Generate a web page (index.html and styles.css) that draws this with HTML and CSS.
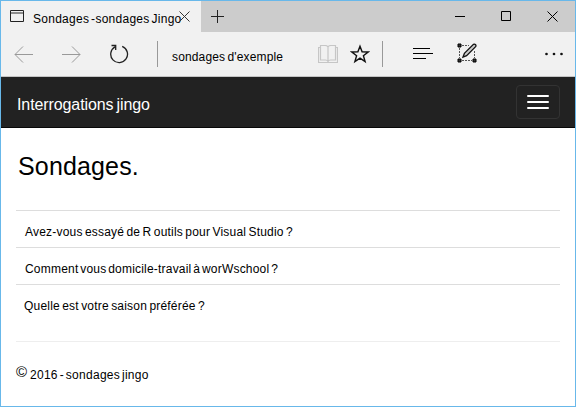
FILE: index.html
```html
<!DOCTYPE html>
<html lang="fr">
<head>
<meta charset="utf-8">
<title>Sondages - sondages Jingo</title>
<link rel="stylesheet" href="styles.css">
</head>
<body>
<div class="window">
  <header class="titlebar">
    <div class="tab">
      <svg class="tab-icon" width="14" height="12" viewBox="0 0 14 12"><rect x="0" y="2" width="14" height="2" fill="#8d8d8d"/><path d="M.5.5h13v11H.5z" fill="none" stroke="#222"/></svg>
      <span class="tab-title">Sondages -sondages Jingo</span>
      <svg class="tab-close" width="11" height="11" viewBox="0 0 11 11"><path d="M.5.5l10 10M10.5.5l-10 10" stroke="#333" fill="none"/></svg>
    </div>
    <svg class="new-tab" width="13" height="13" viewBox="0 0 13 13"><path d="M0 6.5h13M6.5 0v13" stroke="#222"/></svg>
    <div class="controls">
      <svg width="11" height="11" viewBox="0 0 11 11"><path d="M0 5.5h10" stroke="#000"/></svg>
      <svg width="11" height="11" viewBox="0 0 11 11"><path d="M.5.5h9v9h-9z" fill="none" stroke="#000"/></svg>
      <svg width="11" height="11" viewBox="0 0 11 11"><path d="M.5.5l10 10M10.5.5l-10 10" stroke="#000" fill="none"/></svg>
    </div>
  </header>
  <div class="toolbar">
    <svg class="back" width="19" height="17" viewBox="0 0 19 17"><path d="M19 8.5H1M9 .5l-8 8 8 8" fill="none" stroke="#999"/></svg>
    <svg class="forward" width="19" height="17" viewBox="0 0 19 17"><path d="M0 8.5h18M10 .5l8 8-8 8" fill="none" stroke="#999"/></svg>
    <svg class="reload" width="20" height="20" viewBox="0 0 20 20"><path d="M13.2 2.4A8.4 8.4 0 1 1 6 2.9M2.500 1.500h4.200v4.500" fill="none" stroke="#222" stroke-width="1.300"/></svg>
    <span class="divider"></span>
    <span class="address">sondages d'exemple</span>
    <svg class="book" width="20" height="19" viewBox="0 0 20 19"><path d="M10 1.800Q9 .5 7 .5H2.500v14.500H7.500Q9.300 15 10 16.500Q10.700 15 12.500 15H17.500V.5H13Q11 .5 10 1.800zM10 1.800v14.700M2.500 2.500h-2v15h19v-15h-2" fill="none" stroke="#c6c6c6" stroke-width="1.200"/></svg>
    <svg class="star" width="20" height="20" viewBox="0 0 20 20"><path d="M10 2.200l2.100 5.600 6 .2-4.700 3.700 1.700 5.800L10 14.100l-5.100 3.400 1.700-5.800L1.900 8l6-.2z" fill="none" stroke="#111" stroke-width="1.400"/></svg>
    <span class="divider"></span>
    <svg class="hub" width="20" height="12" viewBox="0 0 20 12"><path d="M0 .5h17M0 5.500h20M0 10.500h13" stroke="#000" stroke-width="1.200"/></svg>
    <svg class="note" width="20" height="20" viewBox="0 0 20 20"><path d="M5 2.500h7M2.500 5v10M5 17.500h10M17.500 8v7" fill="none" stroke="#555" stroke-dasharray="2 1"/><path d="M1 1h3v3H1zM1 16h3v3H1zM16 16h3v3h-3z" fill="#333" stroke="#000"/><path d="M6 14l1.400-3.600L16.500 1.300q1.300-.5 2.100.4.700.900 0 2L9.600 12.600z" fill="#ccc" stroke="#111" stroke-width="1.300"/></svg>
    <svg class="more" width="20" height="4" viewBox="0 0 20 4"><g fill="#111"><circle cx="2.500" cy="2" r="1.350"/><circle cx="10" cy="2" r="1.350"/><circle cx="17.500" cy="2" r="1.350"/></g></svg>
  </div>
  <nav class="navbar">
    <span class="brand">Interrogations jingo</span>
    <button class="menu" aria-label="Menu"><i></i><i></i><i></i></button>
  </nav>
  <main class="content">
    <h1>Sondages.</h1>
    <ul class="polls">
      <li><span class="poll-a">Avez-vous essayé de R outils pour Visual Studio ?</span></li>
      <li><span class="poll-b">Comment vous domicile-travail à worWschool ?</span></li>
      <li><span class="poll-c">Quelle est votre saison préférée ?</span></li>
    </ul>
    <footer><span class="copy">©</span><span class="foot">2016 - sondages jingo</span></footer>
  </main>
</div>
</body>
</html>
```
FILE: styles.css
```css
* { box-sizing: border-box; }
body { margin: 0; font: 12px/16px "Liberation Sans", Arial, sans-serif; color: #000; }
svg { display: block; flex: none; }
span { white-space: nowrap; }
.window { width: 576px; height: 407px; border: 1px solid #68b8ea; background: #fff; overflow: hidden; }
.titlebar { display: flex; height: 31px; background: #ccc; }
.tab { display: flex; width: 200px; background: #f1f1f1; }
.tab-icon { margin: 9px 9px 0 9px; }
.tab-title { width: 146px; margin-top: 10px; letter-spacing: 0.27px; word-spacing: -1.7px; }
.tab-close { margin-top: 10px; }
.new-tab { margin: 9px 0 0 10px; }
.controls { display: flex; gap: 35px; margin: 10px 17px 0 auto; }
.toolbar { display: flex; height: 45px; background: #f1f1f1; border-bottom: 1px solid #c4c4c4; }
.back { margin: 14px 0 0 13px; }
.forward { margin: 14px 0 0 29px; }
.reload { margin: 12px 0 0 28px; }
.divider { width: 1px; height: 26px; margin-top: 9px; background: #999; }
.reload + .divider { margin-left: 28px; }
.address { width: 146px; margin: 17px 0 0 14px; letter-spacing: 0.15px; word-spacing: -1.3px; }
.book { margin-top: 13px; }
.star { margin: 12px 0 0 12px; }
.star + .divider { margin-left: 12px; }
.hub { margin: 16px 0 0 30px; }
.note { margin: 11px 0 0 24px; }
.more { margin: 20px 0 0 67px; }
.navbar { display: flex; justify-content: space-between; height: 51px; padding: 8px 15px 0 16px; background: #222; border-bottom: 1px solid #080808; }
.brand { margin-top: 10px; font-size: 16px; line-height: 20px; color: #fff; letter-spacing: -0.1px; word-spacing: -1.2px; }
.menu { display: flex; flex-direction: column; gap: 4px; width: 44px; height: 34px; padding: 9px 10px; background: none; border: 1px solid #333; border-radius: 4px; }
.menu i { width: 22px; height: 2px; background: #fff; border-radius: 1px; }
.content { padding: 22px 15px 0; }
h1 { margin: 0 0 0 2px; font-size: 25px; line-height: 32px; font-weight: 400; letter-spacing: 0.15px; }
.polls { margin: 28px 0 0; padding: 0 0 20px; list-style: none; border-bottom: 1px solid #eee; }
.polls li { height: 37px; padding: 13px 0 0 9px; border-top: 1px solid #ddd; }
.polls li:last-child { padding-left: 8px; }
.poll-a { letter-spacing: 0.2px; word-spacing: -1.2px; }
.poll-b { letter-spacing: 0.2px; word-spacing: -1.7px; }
.poll-c { letter-spacing: 0.2px; word-spacing: -1.2px; }
footer { display: flex; padding-top: 22px; }
.copy { width: 14px; font-size: 15px; }
.foot { padding-top: 3px; letter-spacing: 0.27px; word-spacing: -1.7px; }
```
